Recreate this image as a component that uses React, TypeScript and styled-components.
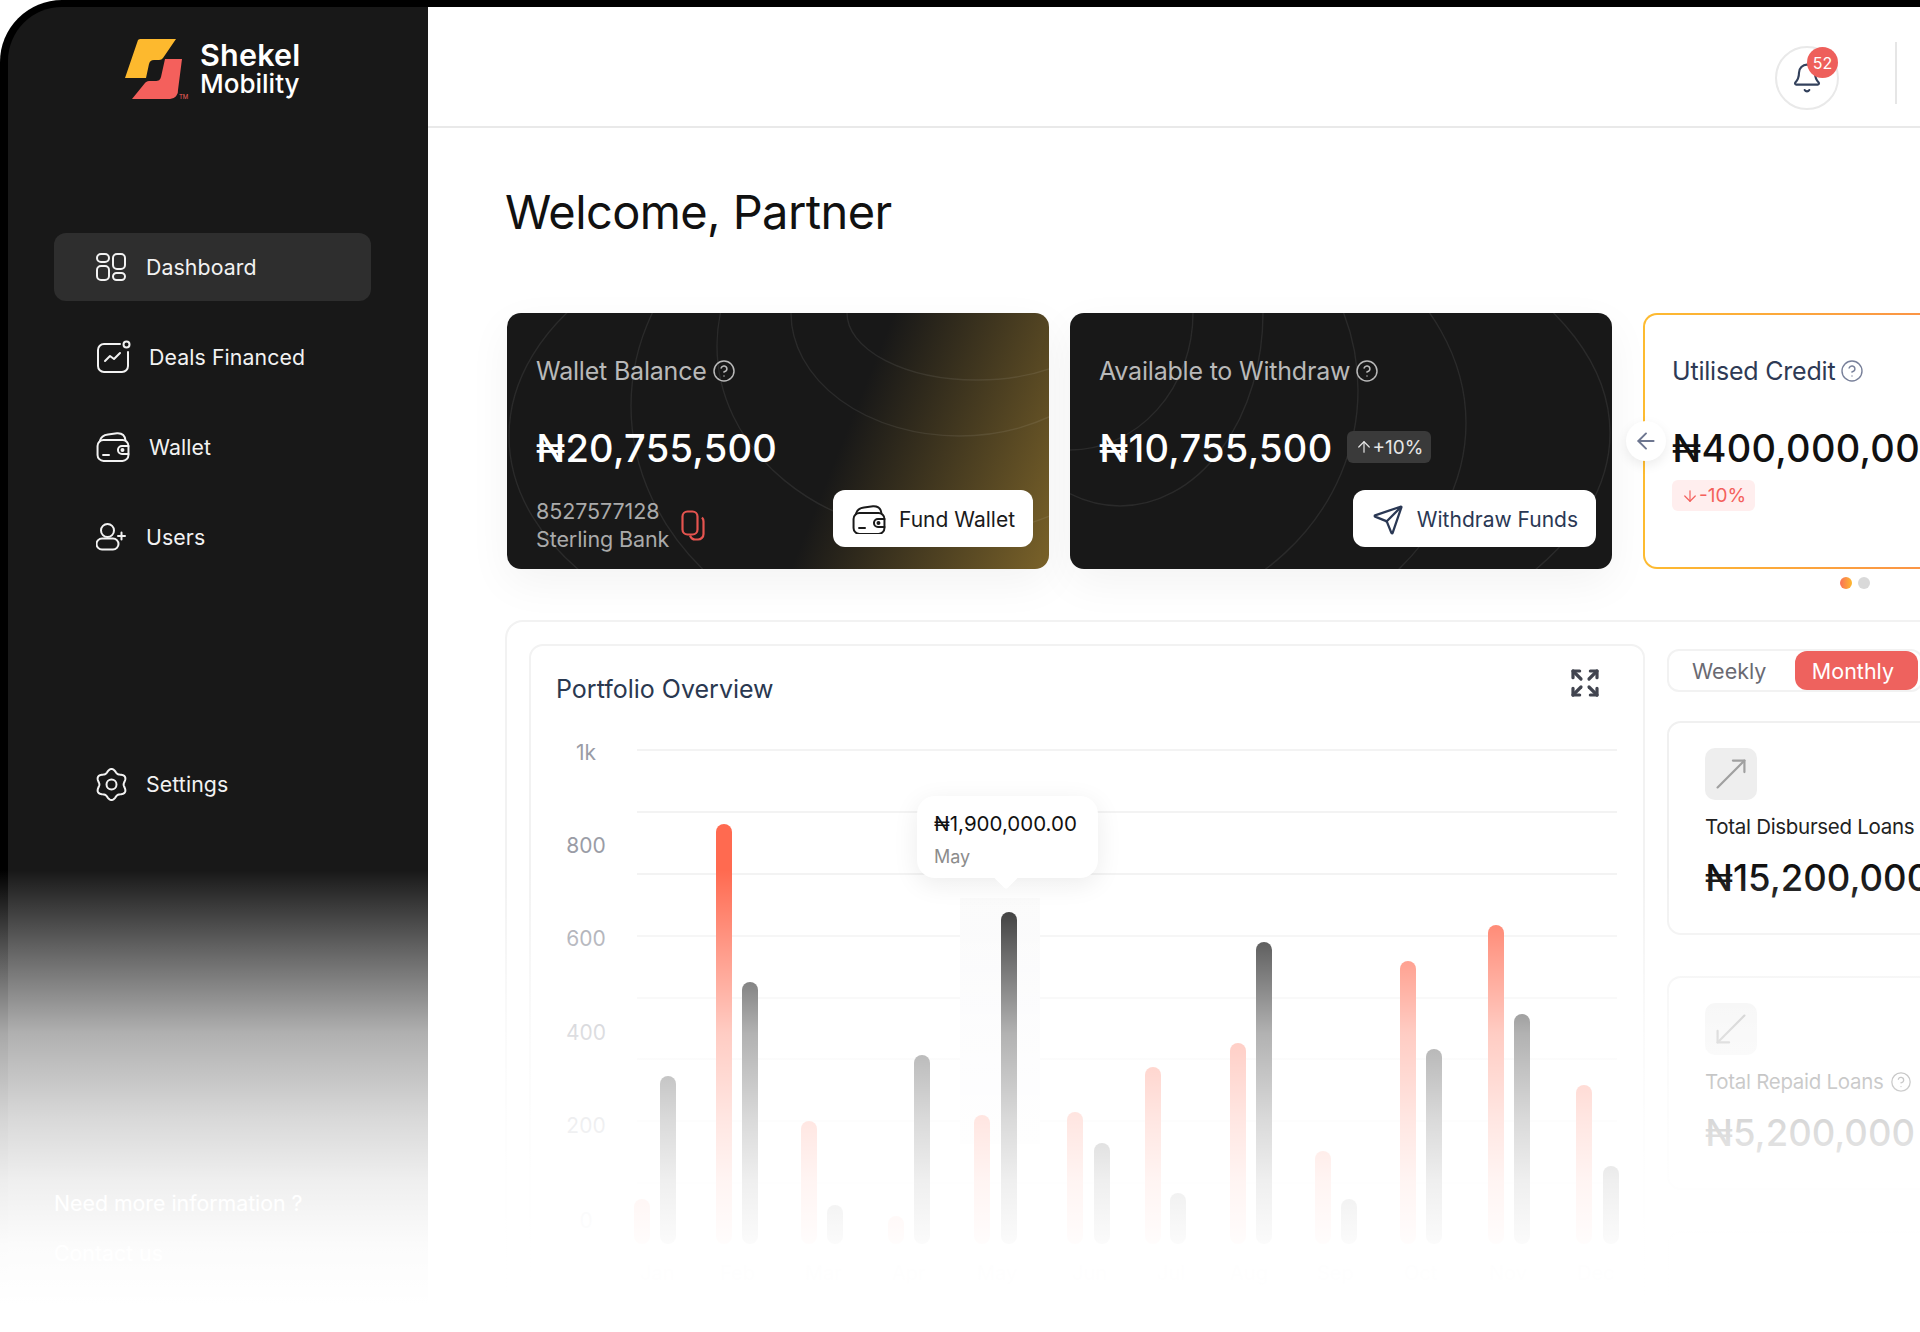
import styled, { createGlobalStyle } from 'styled-components';
import { ArrowDown, ArrowLeft, ArrowUp, Bell, CircleHelp, Expand, MoveDownLeft, MoveUpRight, Send } from 'lucide-react';

const FONT = `Inter, "Noto Sans", "Liberation Sans", sans-serif`;

// [red x, red top, grey x, grey top], page coordinates read off the design
const BARS = [
  [634, 1198, 660, 1075],
  [716, 823, 742, 981],
  [801, 1120, 827, 1204],
  [888, 1215, 914, 1054],
  [974, 1114, 1001, 911],
  [1067, 1111, 1094, 1142],
  [1145, 1066, 1170, 1192],
  [1230, 1042, 1256, 941],
  [1315, 1150, 1341, 1198],
  [1400, 960, 1426, 1048],
  [1488, 924, 1514, 1013],
  [1576, 1084, 1603, 1165],
];
const MONTHS = [
  ['Jan', 640], ['Feb', 720], ['Mar', 805], ['Apr', 892], ['May', 977], ['Jun', 1072],
  ['Jul', 1157], ['Aug', 1230], ['Sep', 1317], ['Oct', 1404], ['Nov', 1489], ['Dec', 1577],
] as const;
const TICKS = [['1k', 759], ['800', 852], ['600', 945], ['400', 1039], ['200', 1132], ['0', 1227]] as const;
const GRID = [749, 811, 873, 935, 997, 1058, 1120, 1182];

// chart svg origin on the page
const OX = 531;
const OY = 717;

const gearPath = (() => {
  const pts: string[] = [];
  for (let i = 0; i < 120; i++) {
    const a = (i / 120) * Math.PI * 2;
    const r = 13.8 - 1.7 * Math.cos(6 * a);
    pts.push(`${(15.5 + r * Math.cos(a)).toFixed(2)} ${(16.5 + r * Math.sin(a)).toFixed(2)}`);
  }
  return `M${pts.join('L')}Z`;
})();

const DashboardIcon = () => (
  <svg width="30" height="28" viewBox="0 0 30 28" fill="none" stroke="currentColor" strokeWidth="2">
    <rect x="1" y="1" width="12" height="8" rx="4" />
    <rect x="1" y="13" width="12" height="14" rx="4" />
    <rect x="17" y="1" width="12" height="15" rx="4" />
    <rect x="17" y="20" width="12" height="7" rx="3.5" />
  </svg>
);

const DealsIcon = () => (
  <svg width="35" height="34" viewBox="0 0 35 34" fill="none" stroke="currentColor" strokeWidth="2" strokeLinecap="round" strokeLinejoin="round">
    <path d="M24 4H8a6 6 0 0 0-6 6v16a6 6 0 0 0 6 6h18a6 6 0 0 0 6-6V12" />
    <circle cx="30.5" cy="4.5" r="3" />
    <path d="M9 21l5-5 4 3 6-6" />
  </svg>
);

const WalletIcon = ({ size = 34 }: { size?: number }) => (
  <svg width={size} height={size * 0.88} viewBox="0 0 34 30" fill="none" stroke="currentColor" strokeWidth="2" strokeLinecap="round" strokeLinejoin="round">
    <rect x="1.5" y="8" width="31" height="21" rx="6" />
    <path d="M4 8.5C5 4.5 8 3 12 2.5l9-1.2C26 1 29 3.5 29.5 8.5" />
    <path d="M7 23h6" />
    <path d="M32.5 14H26a4 4 0 0 0 0 8h6.5" />
    <circle cx="26.5" cy="18" r="1" />
  </svg>
);

const UsersIcon = () => (
  <svg width="30" height="28" viewBox="0 0 30 28" fill="none" stroke="currentColor" strokeWidth="2" strokeLinecap="round">
    <circle cx="11.500" cy="7.500" r="6.500" />
    <path d="M6 15.500h11a5.500 5.500 0 0 1 0 11H6a5.500 5.500 0 0 1 0-11Z" />
    <path d="M25.500 9.500v7M22 13h7" />
  </svg>
);

const SettingsIcon = () => (
  <svg width="32" height="33" viewBox="0 0 32 33" fill="none" stroke="currentColor" strokeWidth="2" strokeLinejoin="round">
    <path d={gearPath} />
    <circle cx="15.500" cy="16.500" r="5" />
  </svg>
);

const CopyIcon = () => (
  <svg width="24" height="31" viewBox="0 0 24 31" fill="none" stroke="#e5544f" strokeWidth="2.200">
    <rect x="1.500" y="1.500" width="15" height="23" rx="5" />
    <path d="M21 7.500c1 1 1.500 2 1.500 4V24a5.500 5.500 0 0 1-5.500 5.500h-3c-2.500 0-4-1.500-5-4" />
  </svg>
);

const LogoMark = () => (
  <svg width="66" height="64" viewBox="0 0 66 64">
    <path d="M15 3a4 4 0 0 1 3-1h35L40 21c-1 1-2 2-4 2h-5c-3 0-4 1-5 4l-3 14H2Z" fill="#fdb92e" />
    <path d="M59 22 55 53a8 8 0 0 1-8 9H9l13-16c1-1 2-2 4-2h6c4 0 5-1 6-4l4-18Z" fill="#f4605c" />
  </svg>
);

function WalletArcs() {
  return (
    <ArcLayer viewBox="0 0 542 256" preserveAspectRatio="none">
      <ellipse cx="470" cy="0" rx="130" ry="67" />
      <ellipse cx="452" cy="0" rx="168" ry="123" />
      <ellipse cx="440" cy="33" rx="230" ry="190" />
      <ellipse cx="420" cy="93" rx="296" ry="250" />
      <ellipse cx="340" cy="123" rx="338" ry="220" />
    </ArcLayer>
  );
}

function WithdrawArcs() {
  return (
    <ArcLayer viewBox="0 0 542 256" preserveAspectRatio="none">
      <ellipse cx="0" cy="0" rx="123" ry="137" />
      <ellipse cx="50" cy="0" rx="143" ry="193" />
      <ellipse cx="40" cy="77" rx="248" ry="230" />
      <ellipse cx="40" cy="110" rx="356" ry="250" />
      <ellipse cx="40" cy="120" rx="500" ry="260" />
    </ArcLayer>
  );
}

function PortfolioChart() {
  return (
    <ChartWrap>
      <svg width="1112" height="640" viewBox="0 0 1112 640">
        <defs>
          <linearGradient id="hover-col" x1="0" y1="0" x2="0" y2="1">
            <stop offset="0" stopColor="#fafafa" />
            <stop offset="1" stopColor="#f7f7fa" />
          </linearGradient>
        </defs>
        {GRID.map(y => (
          <line key={y} x1={637 - OX} x2={1617 - OX} y1={y - OY} y2={y - OY} stroke="#f3f3f3" strokeWidth="2" />
        ))}
        <rect x={960 - OX} y={897 - OY} width="80" height="246" fill="url(#hover-col)" />
        {TICKS.map(([t, y]) => (
          <text key={t} x={586 - OX} y={y - OY} textAnchor="middle" fontSize="21" fill="#9a9ca6" fontFamily={FONT}>{t}</text>
        ))}
        {BARS.map(([rx, ry, gx, gy]) => (
          <g key={rx}>
            <rect x={rx - OX} y={ry - OY} width="16" height={1243 - ry} rx="8" fill="#ff6a50" />
            <rect x={gx - OX} y={gy - OY} width="16" height={1243 - gy} rx="8" fill="#1c1c1c" />
          </g>
        ))}
        {MONTHS.map(([m, x]) => (
          <text key={m} x={x - OX} y={1279 - OY} fontSize="20" fill="#8a8c96" fontFamily={FONT}>{m}</text>
        ))}
      </svg>
      <Tooltip>
        <TooltipValue>₦1,900,000.00</TooltipValue>
        <TooltipMonth>May</TooltipMonth>
      </Tooltip>
    </ChartWrap>
  );
}

export default function App() {
  return (
    <>
      <GlobalStyle />
      <Page>
        <Frame>
          <Sidebar>
            <Brand>
              <LogoWrap>
                <LogoMark />
                <Tm>TM</Tm>
              </LogoWrap>
              <BrandText>
                <BrandTop>Shekel</BrandTop>
                <BrandBottom>Mobility</BrandBottom>
              </BrandText>
            </Brand>

            <Nav>
              <NavItem $active $gap={20}><DashboardIcon />Dashboard</NavItem>
              <NavItem $gap={18}><DealsIcon />Deals Financed</NavItem>
              <NavItem $gap={19}><WalletIcon />Wallet</NavItem>
              <NavItem $gap={20}><UsersIcon />Users</NavItem>
            </Nav>

            <SettingsRow><NavItem $gap={18}><SettingsIcon />Settings</NavItem></SettingsRow>

            <HelpBlock>
              <HelpLine>Need more information ?</HelpLine>
              <HelpLine>Contact us</HelpLine>
            </HelpBlock>
          </Sidebar>

          <Main>
            <Header>
              <BellButton>
                <Bell size={32} strokeWidth={1.6} color="#33415c" />
                <BellBadge>52</BellBadge>
              </BellButton>
              <HeaderDivider />
            </Header>

            <Content>
              <Title>Welcome, Partner</Title>

              <CardRow>
                <DarkCard $gold>
                  <WalletArcs />
                  <CardLabel>Wallet Balance <CircleHelp size={24} strokeWidth={1.5} /></CardLabel>
                  <AmountRow><Amount>₦20,755,500</Amount></AmountRow>
                  <CardFooter>
                    <Account>
                      <AccountText>8527577128<br />Sterling Bank</AccountText>
                      <CopyIcon />
                    </Account>
                    <ActionButton $dark><WalletIcon size={34} />Fund Wallet</ActionButton>
                  </CardFooter>
                </DarkCard>

                <DarkCard>
                  <WithdrawArcs />
                  <CardLabel>Available to Withdraw <CircleHelp size={24} strokeWidth={1.5} /></CardLabel>
                  <AmountRow>
                    <Amount>₦10,755,500</Amount>
                    <UpBadge><ArrowUp size={18} strokeWidth={1.6} />+10%</UpBadge>
                  </AmountRow>
                  <CardFooter>
                    <span />
                    <ActionButton><Send size={32} strokeWidth={1.7} />Withdraw Funds</ActionButton>
                  </CardFooter>
                </DarkCard>

                <CreditCard>
                  <CreditLabel>Utilised Credit <CircleHelp size={24} strokeWidth={1.4} color="#78809a" /></CreditLabel>
                  <AmountRow><CreditAmount>₦400,000,000</CreditAmount></AmountRow>
                  <DownBadge><ArrowDown size={18} strokeWidth={1.6} />-10%</DownBadge>
                </CreditCard>

                <SlideArrow><ArrowLeft size={26} strokeWidth={1.8} /></SlideArrow>
              </CardRow>

              <Dots>
                <Dot $on />
                <Dot />
              </Dots>

              <Overview>
                <ChartPanel>
                  <ChartHead>
                    <ChartTitle>Portfolio Overview</ChartTitle>
                    <Expand size={32} strokeWidth={2.4} color="#41444f" />
                  </ChartHead>
                  <PortfolioChart />
                </ChartPanel>

                <SideColumn>
                  <Tabs>
                    <Tab>Weekly</Tab>
                    <Tab $on>Monthly</Tab>
                  </Tabs>

                  <StatCard>
                    <StatIcon><MoveUpRight size={46} strokeWidth={1.15} /></StatIcon>
                    <StatLabel>Total Disbursed Loans</StatLabel>
                    <StatValue>₦15,200,000</StatValue>
                  </StatCard>

                  <StatCard>
                    <StatIcon><MoveDownLeft size={46} strokeWidth={1.15} /></StatIcon>
                    <StatLabel>Total Repaid Loans <CircleHelp size={22} strokeWidth={1.4} /></StatLabel>
                    <StatValue>₦5,200,000</StatValue>
                  </StatCard>

                  <StatCard />
                </SideColumn>
              </Overview>
            </Content>
          </Main>
        </Frame>
        <BottomFade />
      </Page>
    </>
  );
}

const GlobalStyle = createGlobalStyle`
  * { box-sizing: border-box; }
  body {
    margin: 0;
    background: #fff;
    font-family: ${FONT};
  }
`;

const Page = styled.div`
  position: relative;
  width: 1920px;
  height: 1332px;
  overflow: hidden;
  background: #fff;
`;

const Frame = styled.div`
  display: flex;
  height: 1332px;
  padding: 7px 0 0 8px;
  background: #000;
  border-top-left-radius: 62px;
`;

const Sidebar = styled.aside`
  flex: 0 0 420px;
  display: flex;
  flex-direction: column;
  background: #181818;
  border-top-left-radius: 54px;
  color: #fff;
`;

const Brand = styled.div`
  display: flex;
  align-items: center;
  gap: 11px;
  height: 64px;
  margin: 30px 0 0 115px;
`;

const LogoWrap = styled.div`
  position: relative;
  display: flex;
`;

const Tm = styled.span`
  position: absolute;
  left: 56px;
  bottom: 1px;
  font-size: 6px;
  color: #f4605c;
`;

const BrandText = styled.div`
  display: flex;
  flex-direction: column;
  margin-top: -3px;
`;

const BrandTop = styled.span`
  font-size: 30.5px;
  line-height: 31px;
  font-weight: 600;
  letter-spacing: 0.2px;
`;

const BrandBottom = styled.span`
  font-size: 26px;
  line-height: 27px;
  font-weight: 500;
`;

const Nav = styled.nav`
  display: flex;
  flex-direction: column;
  gap: 22px;
  margin: 132px 0 0 46px;
  width: 317px;
`;

const NavItem = styled.div<{ $active?: boolean; $gap: number }>`
  display: flex;
  align-items: center;
  gap: ${({ $gap }) => $gap}px;
  height: 68px;
  padding-left: 42px;
  border-radius: 12px;
  background: ${({ $active }) => ($active ? '#2e2e2e' : 'transparent')};
  font-size: 21.3px;
  letter-spacing: 0.1px;
  color: #f2f2f2;
`;

const SettingsRow = styled.div`
  margin: 179px 0 0 46px;
  width: 317px;
`;

const HelpBlock = styled.div`
  display: flex;
  flex-direction: column;
  gap: 24px;
  margin: 372px 0 0 46px;
`;

const HelpLine = styled.span`
  font-size: 21.3px;
  line-height: 26px;
  color: #fff;
`;

const Main = styled.main`
  flex: 1;
  min-width: 0;
  overflow: hidden;
  background: #fff;
`;

const Header = styled.header`
  display: flex;
  align-items: center;
  justify-content: flex-end;
  gap: 56px;
  height: 121px;
  padding: 21px 23px 0 0;
  border-bottom: 2px solid #e9e9e9;
`;

const BellButton = styled.div`
  position: relative;
  display: flex;
  align-items: center;
  justify-content: center;
  width: 64px;
  height: 64px;
  margin-top: 2px;
  border: 2px solid #e9e9e9;
  border-radius: 50%;
`;

const BellBadge = styled.span`
  position: absolute;
  top: -1px;
  right: -1px;
  display: flex;
  align-items: center;
  justify-content: center;
  width: 31px;
  height: 31px;
  border-radius: 50%;
  background: #ee5f5b;
  color: #fff;
  font-size: 16px;
`;

const HeaderDivider = styled.div`
  width: 2px;
  height: 62px;
  margin-top: -8px;
  background: #e6e6e6;
`;

const Content = styled.div`
  padding: 0 0 0 77px;
`;

const Title = styled.h1`
  margin: 50px 0 0;
  font-size: 47px;
  line-height: 68px;
  font-weight: 400;
  letter-spacing: -0.6px;
  color: #111;
`;

const CardRow = styled.div`
  position: relative;
  display: flex;
  gap: 21px;
  width: 1700px;
  height: 256px;
  margin: 67px 0 0 2px;
`;

const DarkCard = styled.section<{ $gold?: boolean }>`
  position: relative;
  flex: 0 0 542px;
  display: flex;
  flex-direction: column;
  height: 256px;
  padding: 40px 16px 22px 29px;
  overflow: hidden;
  border-radius: 14px;
  background: ${({ $gold }) => ($gold ? 'linear-gradient(112deg, #181818 60%, #7a6229 100%)' : '#181818')};
  box-shadow: 0 14px 44px rgba(0, 0, 0, 0.05);
  color: #fff;
`;

const ArcLayer = styled.svg`
  position: absolute;
  inset: 0;
  width: 100%;
  height: 100%;
  fill: none;
  stroke: #fff;
  stroke-opacity: 0.08;
  stroke-width: 1.4;
`;

const CardLabel = styled.div`
  position: relative;
  display: flex;
  align-items: center;
  gap: 5px;
  font-size: 25px;
  line-height: 36px;
  letter-spacing: -0.2px;
  color: #b9b9b9;
`;

const AmountRow = styled.div`
  position: relative;
  display: flex;
  align-items: center;
  gap: 14px;
  height: 50px;
  margin-top: 34px;
  white-space: nowrap;
`;

const Amount = styled.span`
  font-size: 38px;
  font-weight: 500;
  letter-spacing: 0.3px;
  color: #fff;
`;

const CardFooter = styled.div`
  position: relative;
  display: flex;
  justify-content: space-between;
  margin-top: auto;
`;

const Account = styled.div`
  display: flex;
  align-items: center;
  gap: 12px;
  margin-bottom: -13px;
`;

const AccountText = styled.div`
  font-size: 21.5px;
  line-height: 28px;
  letter-spacing: -0.1px;
  color: #aaa;
`;

const ActionButton = styled.button<{ $dark?: boolean }>`
  display: flex;
  align-items: center;
  gap: 13px;
  height: 57px;
  padding: 2px 18px 0 19px;
  border: none;
  border-radius: 12px;
  background: #fff;
  color: ${({ $dark }) => ($dark ? '#1a1a1a' : '#2a3854')};
  font-family: ${FONT};
  font-size: 21px;
`;

const UpBadge = styled.span`
  display: flex;
  align-items: center;
  height: 32px;
  margin-top: -2px;
  padding: 0 8px;
  border-radius: 6px;
  background: #3a3a3a;
  font-size: 19px;
  color: #e6e6e6;
`;

const CreditCard = styled.section`
  flex: 0 0 543px;
  height: 256px;
  margin-left: 10px;
  padding: 38px 16px 22px 27px;
  border: 2px solid transparent;
  border-radius: 14px;
  background:
    linear-gradient(#fff, #fff) padding-box,
    linear-gradient(90deg, #fdbb30, #f9705a) border-box;
`;

const CreditLabel = styled(CardLabel)`
  color: #2e3a55;
`;

const CreditAmount = styled(Amount)`
  color: #111;
`;

const DownBadge = styled.span`
  display: inline-flex;
  align-items: center;
  height: 31px;
  margin-top: 7px;
  padding: 0 9px;
  border-radius: 6px;
  background: #ffeeee;
  font-size: 19px;
  color: #f4605c;
`;

const SlideArrow = styled.div`
  position: absolute;
  left: 1119px;
  top: 108px;
  display: flex;
  align-items: center;
  justify-content: center;
  width: 40px;
  height: 40px;
  border-radius: 50%;
  background: #fff;
  box-shadow: 0 4px 12px rgba(0, 0, 0, 0.08);
  color: #6d7690;
`;

const Dots = styled.div`
  display: flex;
  gap: 6px;
  height: 12px;
  margin: 8px 0 0 1335px;
`;

const Dot = styled.span<{ $on?: boolean }>`
  width: 12px;
  height: 12px;
  border-radius: 50%;
  background: ${({ $on }) => ($on ? 'linear-gradient(90deg, #f9705a, #fdb92e)' : '#d9d9d9')};
`;

const Overview = styled.div`
  display: flex;
  gap: 22px;
  width: 1600px;
  height: 760px;
  margin-top: 31px;
  padding: 22px;
  border: 2px solid #f2f2f2;
  border-radius: 18px;
`;

const ChartPanel = styled.div`
  flex: 0 0 1116px;
  border: 2px solid #f2f2f2;
  border-radius: 14px;
`;

const ChartHead = styled.div`
  display: flex;
  align-items: flex-start;
  justify-content: space-between;
  height: 72px;
  padding: 21px 42px 0 25px;
`;

const ChartTitle = styled.h2`
  margin: 0;
  padding-top: 4px;
  font-size: 25px;
  line-height: 36px;
  font-weight: 400;
  color: #2a3850;
`;

const ChartWrap = styled.div`
  position: relative;
`;

const Tooltip = styled.div`
  position: absolute;
  left: 386px;
  top: 78px;
  width: 181px;
  height: 82px;
  padding: 15px 17px;
  border-radius: 18px;
  background: #fff;
  box-shadow: 0 6px 26px rgba(0, 0, 0, 0.08);

  &::after {
    content: '';
    position: absolute;
    left: 80px;
    bottom: -8px;
    width: 18px;
    height: 18px;
    background: #fff;
    transform: rotate(45deg);
    border-radius: 3px;
  }
`;

const TooltipValue = styled.div`
  font-size: 20.5px;
  line-height: 26px;
  color: #111;
`;

const TooltipMonth = styled.div`
  margin-top: 8px;
  font-size: 18px;
  line-height: 24px;
  color: #8c8c8c;
`;

const SideColumn = styled.div`
  flex: 0 0 400px;
  display: flex;
  flex-direction: column;
  gap: 29px;
  padding-top: 5px;
`;

const Tabs = styled.div`
  display: flex;
  align-items: center;
  justify-content: space-between;
  width: 256px;
  height: 45px;
  padding: 0 3px 0 23px;
  border: 2px solid #f2f2f2;
  border-radius: 12px;
`;

const Tab = styled.span<{ $on?: boolean }>`
  display: flex;
  align-items: center;
  height: 39px;
  padding: ${({ $on }) => ($on ? '0 24px 0 17px' : '0')};
  border-radius: 12px;
  background: ${({ $on }) => ($on ? '#ee625e' : 'transparent')};
  color: ${({ $on }) => ($on ? '#fff' : '#6a6a72')};
  font-size: 21.5px;
`;

const StatCard = styled.div`
  display: flex;
  flex-direction: column;
  flex: 0 0 214px;
  margin-bottom: 12px;
  padding: 25px 0 0 36px;
  border: 2px solid #f0f0f0;
  border-radius: 14px;
`;

const StatIcon = styled.div`
  display: flex;
  align-items: center;
  justify-content: center;
  width: 52px;
  height: 52px;
  border-radius: 10px;
  background: #eee;
  color: #a0a0a0;
`;

const StatLabel = styled.div`
  display: flex;
  align-items: center;
  gap: 6px;
  margin-top: 13px;
  font-size: 20.5px;
  line-height: 28px;
  letter-spacing: -0.3px;
  color: #222;
`;

const StatValue = styled.div`
  margin-top: 14px;
  font-size: 36.5px;
  line-height: 46px;
  font-weight: 500;
  white-space: nowrap;
  color: #111;
`;

const BottomFade = styled.div`
  position: absolute;
  left: 0;
  right: 0;
  top: 870px;
  bottom: 0;
  pointer-events: none;
  background: linear-gradient(
    180deg,
    rgba(255, 255, 255, 0) 0,
    rgba(255, 255, 255, 0.33) 80px,
    rgba(255, 255, 255, 0.66) 163px,
    rgba(255, 255, 255, 0.83) 247px,
    rgba(255, 255, 255, 0.93) 310px,
    rgba(255, 255, 255, 0.985) 375px,
    #fff 435px
  );
`;
